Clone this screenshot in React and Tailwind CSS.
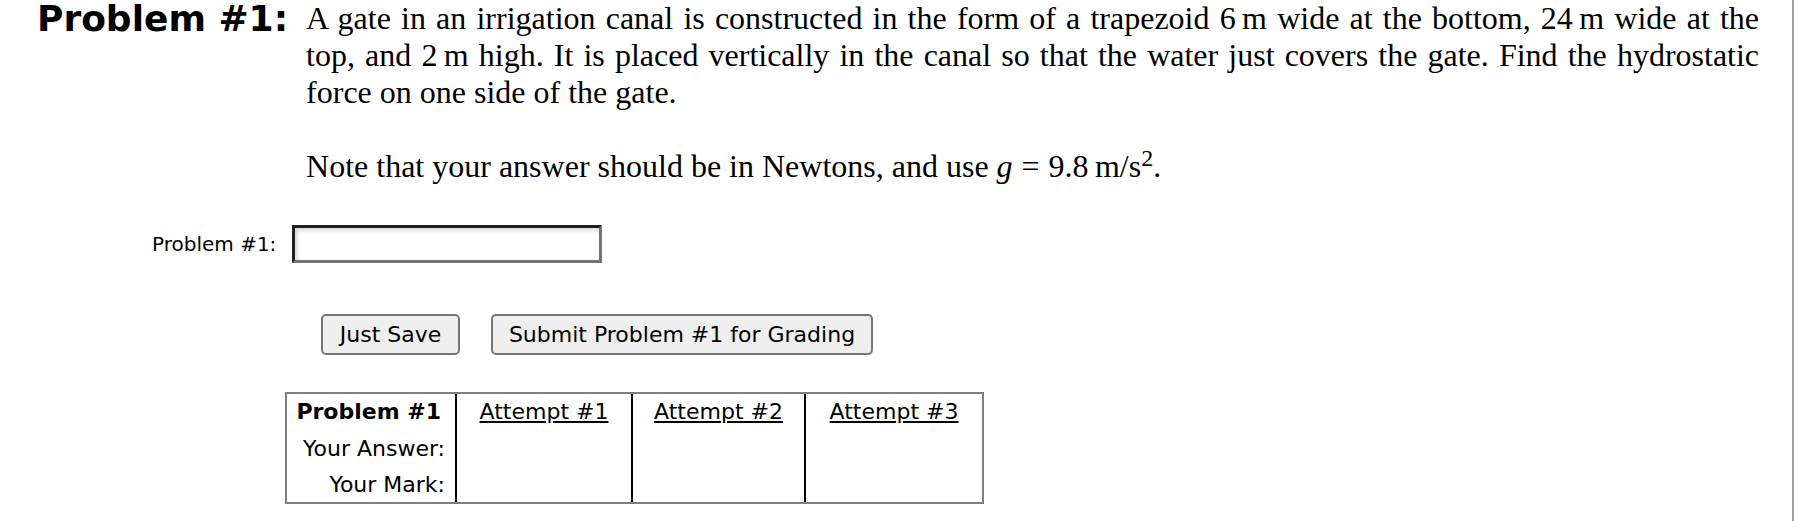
import React from 'react';

const serif = { fontFamily: '"Liberation Serif", "Times New Roman", serif' };
const sans = { fontFamily: '"DejaVu Sans", Verdana, sans-serif' };

const attempts = ['Attempt #1', 'Attempt #2', 'Attempt #3'];

const App = () => {
  return (
    <div className="w-[1794px] h-[521px] bg-white text-black border-r-2 border-[#a0a0a0]">
      <div className="flex items-start">
        <h1 style={sans} className="pl-[37px] text-[36px] font-bold leading-[37px] whitespace-nowrap">
          Problem #1:
        </h1>
        <div style={serif} className="ml-[18px] w-[1453px] text-[32px] leading-[37px]">
          <p className="text-justify">
            A gate in an irrigation canal is constructed in the form of a trapezoid 6{'\u2009'}m wide at the
            bottom, 24{'\u2009'}m wide at the top, and 2{'\u2009'}m high. It is placed vertically in the canal so
            that the water just covers the gate. Find the hydrostatic force on one side of the gate.
          </p>
          <p className="mt-[37px]">
            Note that your answer should be in Newtons, and use <i>g</i>
            <span className="mx-[0.28em]">=</span>9.8{'\u2009'}m/s<sup className="-top-[0.45em]">2</sup>.
          </p>
        </div>
      </div>

      <div style={sans} className="flex items-center mt-[40px] pl-[152px]">
        <label className="text-[20px] leading-[23px] mt-[1px]">Problem #1:</label>
        <input
          type="text"
          className="ml-[16px] w-[310px] h-[38px] border-[3px] border-t-[#1f1f1f] border-l-[#1f1f1f] border-b-[#737373] border-r-[#737373] bg-white shadow-[inset_2px_2px_4px_rgba(0,0,0,0.18)] outline-none"
        />
      </div>

      <div style={sans} className="flex mt-[51px] pl-[321px] gap-[31px]">
        <button className="w-[139px] h-[41px] text-[22px] leading-[26px] bg-[#efefef] border-2 border-[#767676] rounded-[5px]">
          Just Save
        </button>
        <button className="w-[382px] h-[41px] text-[22px] leading-[26px] bg-[#efefef] border-2 border-[#767676] rounded-[5px]">
          Submit Problem #1 for Grading
        </button>
      </div>

      <div style={sans} className="mt-[37px] ml-[285px] w-[699px] border-2 border-[#808080] text-[22px] leading-[26px]">
        <div className="grid grid-cols-[170px_176px_173px_176px]">
          <div className="border-r-2 border-black">
            <div className="h-[35px] flex items-center justify-end pr-[14px] font-bold">Problem #1</div>
            <div className="h-[39px] flex items-center justify-end pr-[10px]">Your Answer:</div>
            <div className="h-[34px] flex items-center justify-end pr-[10px]">Your Mark:</div>
          </div>
          {attempts.map((a, idx) => (
            <div key={idx} className={idx < 2 ? 'border-r-2 border-black' : ''}>
              <div className="h-[35px] flex items-center justify-center">
                <a href="#" className="underline text-black">{a}</a>
              </div>
              <div className="h-[39px]"></div>
              <div className="h-[34px]"></div>
            </div>
          ))}
        </div>
      </div>
    </div>
  );
};

export default App;
